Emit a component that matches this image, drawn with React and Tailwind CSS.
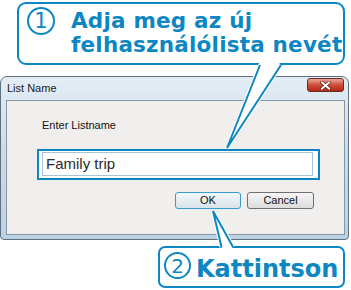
import React from 'react';

const BLUE = '#0d87c3';

function Circled({ n, className }) {
  return (
    <div
      className={`flex items-center justify-center rounded-full border-2 border-[#0d87c3] text-[#0d87c3] font-['DejaVu_Sans',sans-serif] leading-none ${className}`}
    >
      {n}
    </div>
  );
}

function Pointers() {
  return (
    <svg className="pointer-events-none absolute inset-0" width="351" height="290" viewBox="0 0 351 290">
      {/* top callout -> text field */}
      <polygon points="259.5,62 280.5,62 227,148" fill="#fff" />
      <polyline points="260,65 227,148 281,65" fill="none" stroke="#fff" strokeWidth="4" strokeLinejoin="miter" />
      <polygon points="261,60 279,60 228,145" fill="#fff" />
      <polyline points="260,65 227,148 281,65" fill="none" stroke={BLUE} strokeWidth="2" strokeLinejoin="miter" />
      {/* OK button -> bottom callout */}
      <polyline points="221.5,247 213,211 233,247" fill="none" stroke="#fff" strokeWidth="4" />
      <polygon points="222,249 232.5,249 213.5,213" fill="#fff" />
      <polyline points="221.5,247 213,211 233,247" fill="none" stroke={BLUE} strokeWidth="2" />
    </svg>
  );
}

function CloseButton() {
  return (
    <div className="mt-px mr-[4px] flex h-[14px] w-[37px] items-center justify-center rounded-[3px] border border-[#6b2a22] bg-gradient-to-b from-[#e8a598] via-[#cf4b3a] to-[#b3261a]">
      <svg width="11" height="9" viewBox="0 0 11 9">
        <path d="M2 1.5 L9 7.5 M9 1.5 L2 7.5" stroke="#5a1a12" strokeWidth="3.4" strokeLinecap="square" />
        <path d="M2 1.5 L9 7.5 M9 1.5 L2 7.5" stroke="#fff" strokeWidth="2" strokeLinecap="square" />
      </svg>
    </div>
  );
}

export default function App() {
  return (
    <div className="relative h-[290px] w-[351px] overflow-hidden bg-white">
      {/* step 1 callout */}
      <div className="ml-[17px] mt-[2px] flex h-[63px] w-[328px] items-start rounded-[9px] border-2 border-[#0d87c3] bg-white pl-[8px] pt-[3px]">
        <Circled n="1" className="h-[28px] w-[28px] shrink-0 text-[21px]" />
        <div className="ml-[16px] mt-[2px] font-['DejaVu_Sans',sans-serif] text-[21.5px] font-bold leading-[24px] tracking-[0.2px] text-[#0d87c3]">
          <div>Adja meg az új</div>
          <div>felhasználólista nevét</div>
        </div>
      </div>

      {/* dialog window */}
      <div className="mt-[11px] flex h-[164px] w-[349px] flex-col rounded-t-[7px] rounded-b-[4px] border border-[#5f7080] bg-gradient-to-b from-[#e3edf5] via-[#cadbe9] to-[#bcd2e3]">
        <div className="flex h-[23px] items-start justify-between">
          <span className="mt-[5px] ml-[6px] font-['Liberation_Sans',sans-serif] text-[11px] leading-[12px] text-[#1b1b1b]">
            List Name
          </span>
          <CloseButton />
        </div>
        <div className="ml-[5px] mr-[3px] h-[135px] border border-[#8797a4] bg-[#f0efed] pl-[30px] pt-[18px] font-['Liberation_Sans',sans-serif]">
          <div className="ml-[5px] h-[12px] text-[11px] leading-[12px] text-[#111]">Enter Listname</div>
          <div className="mt-[18px] h-[31px] w-[283px] border-2 border-[#0d87c3] bg-white pl-[3px] pr-[5px] pt-px">
            <div className="flex h-[24px] items-center border border-[#a9c6d9] pl-[3px] text-[15px] text-[#2a2a2a]">
              Family trip
            </div>
          </div>
          <div className="ml-[138px] mt-[12px] flex gap-[6px] text-[11px] text-[#111]">
            <div className="flex h-[17px] w-[66px] items-center justify-center rounded-[3px] border border-[#3a9ad2] bg-gradient-to-b from-[#f4f8fa] to-[#d9e3e8]">
              OK
            </div>
            <div className="flex h-[17px] w-[67px] items-center justify-center rounded-[3px] border border-[#707070] bg-gradient-to-b from-[#f6f6f6] to-[#dcdcdc]">
              Cancel
            </div>
          </div>
        </div>
      </div>

      {/* step 2 callout */}
      <div className="ml-[158px] mt-[6px] flex h-[42px] w-[187px] items-start rounded-[7px] border-2 border-[#0d87c3] bg-white pl-[4px] pt-[4px]">
        <Circled n="2" className="h-[27px] w-[27px] shrink-0 text-[20px]" />
        <div className="ml-[5px] mt-[3px] font-['DejaVu_Sans',sans-serif] text-[24px] font-bold leading-[28px] text-[#0d87c3]">
          Kattintson
        </div>
      </div>

      <Pointers />
    </div>
  );
}
